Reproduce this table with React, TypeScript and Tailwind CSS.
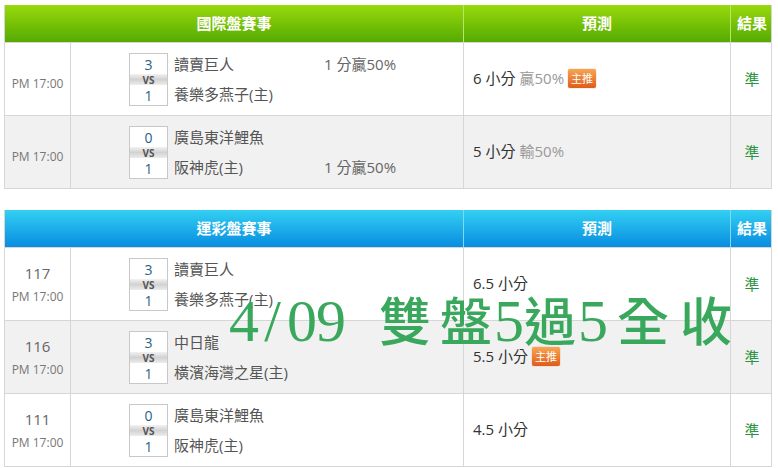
import React from 'react';

type Row = {
  no?: string;
  time: string;
  s1: string;
  s2: string;
  t1: string;
  t2: string;
  hc?: string;
  hcLine?: 1 | 2;
  pick: string;
  pickNote?: string;
  hot?: boolean;
  res: string;
};

const intlRows: Row[] = [
  { time: 'PM 17:00', s1: '3', s2: '1', t1: '讀賣巨人', t2: '養樂多燕子(主)', hc: '1 分贏50%', hcLine: 1, pick: '6 小分', pickNote: '贏50%', hot: true, res: '準' },
  { time: 'PM 17:00', s1: '0', s2: '1', t1: '廣島東洋鯉魚', t2: '阪神虎(主)', hc: '1 分贏50%', hcLine: 2, pick: '5 小分', pickNote: '輸50%', res: '準' },
];

const lotteryRows: Row[] = [
  { no: '117', time: 'PM 17:00', s1: '3', s2: '1', t1: '讀賣巨人', t2: '養樂多燕子(主)', pick: '6.5 小分', res: '準' },
  { no: '116', time: 'PM 17:00', s1: '3', s2: '1', t1: '中日龍', t2: '橫濱海灣之星(主)', pick: '5.5 小分', hot: true, res: '準' },
  { no: '111', time: 'PM 17:00', s1: '0', s2: '1', t1: '廣島東洋鯉魚', t2: '阪神虎(主)', pick: '4.5 小分', res: '準' },
];

const cols = 'grid grid-cols-[65px_393px_267px_43px]';

const Badge = () => (
  <span className="ml-[4px] inline-flex h-[19px] items-center rounded-[2px] bg-gradient-to-b from-[#f8a550] to-[#de5c18] px-[3px] text-[11px] leading-none text-white shadow-[0_0_1px_#c05010]">
    主推
  </span>
);

const ScoreBox = ({ a, b }: { a: string; b: string }) => (
  <div className="mt-[1px] flex w-[39px] flex-col border border-[#c8c8c8] bg-white">
    <div className="flex h-[20px] items-center justify-center text-[14px] text-[#2a5f86]">{a}</div>
    <div className="flex h-[11px] items-center justify-center bg-gradient-to-b from-[#f2f2f2] via-[#d2d2d2] to-[#ececec] text-[10px] font-bold leading-none text-[#555]">
      VS
    </div>
    <div className="flex h-[20px] items-center justify-center text-[14px] text-[#2a5f86]">{b}</div>
  </div>
);

const Table = ({ title, rows, blue }: { title: string; rows: Row[]; blue?: boolean }) => {
  const head = blue
    ? 'bg-gradient-to-b from-[#33d0f2] to-[#0a8ce0]'
    : 'bg-gradient-to-b from-[#98da0c] to-[#55aa03]';
  const sep = blue ? 'border-[#7fd8f5]' : 'border-[#b9e66a]';
  return (
    <div className="w-[768px] border-x border-b border-[#d6d6d6]">
      <div className={`${cols} h-[37px] text-[15px] font-bold text-white ${head}`}>
        <div className="col-span-2 flex items-center justify-center">{title}</div>
        <div className={`flex items-center justify-center border-l ${sep}`}>預測</div>
        <div className={`flex items-center justify-center border-l ${sep}`}>結果</div>
      </div>
      {rows.map((r, i) => (
        <div
          key={i}
          className={`${cols} h-[73px] border-t border-[#d6d6d6] ${i % 2 === 1 ? 'bg-[#f1f1f1]' : 'bg-white'}`}
        >
          <div className={`flex flex-col items-center justify-center text-[#777] ${r.no ? '' : 'pt-[10px]'}`}>
            {r.no && <div className="mb-[8px] text-[15px] leading-[18px] text-[#666]">{r.no}</div>}
            <div className="text-[12px] leading-[14px]">{r.time}</div>
          </div>
          <div className="flex items-center border-l border-[#d6d6d6] pl-[58px]">
            <ScoreBox a={r.s1} b={r.s2} />
            <div className="ml-[6px] flex w-[150px] flex-col justify-between self-stretch py-[10px] text-[15px] text-[#555]">
              <div className="leading-[22px]">{r.t1}</div>
              <div className="leading-[22px]">{r.t2}</div>
            </div>
            <div className="flex flex-col justify-between self-stretch py-[10px] text-[15px] text-[#666]">
              <div className="h-[22px] leading-[22px]">{r.hcLine === 1 ? r.hc : ''}</div>
              <div className="h-[22px] leading-[22px]">{r.hcLine === 2 ? r.hc : ''}</div>
            </div>
          </div>
          <div className="flex items-center border-l border-[#d6d6d6] pb-[2px] pl-[9px] text-[15px] text-[#333]">
            <span>{r.pick}</span>
            {r.pickNote && <span className="ml-[4px] text-[#999]">{r.pickNote}</span>}
            {r.hot && <Badge />}
          </div>
          <div className="flex items-center justify-center border-l border-[#d6d6d6] text-[15px] text-[#2b9443]">
            {r.res}
          </div>
        </div>
      ))}
    </div>
  );
};

// watermark glyphs: [char, width, margin-left, cjk]
const mark: [string, number, number, boolean][] = [
  ['4', 29, 0, false],
  ['/', 29, 0, false],
  ['0', 29, 0, false],
  ['9', 29, 0, false],
  ['雙', 56, 32, true],
  ['盤', 56, 5, true],
  ['5', 28, 0, false],
  ['過', 56, 0, true],
  ['5', 28, 0, false],
  ['全', 56, 9, true],
  ['收', 56, 7, true],
];

export default function App() {
  return (
    <div
      className="relative h-[468px] w-[778px] overflow-hidden bg-white pl-[4px] pt-[5px]"
      style={{ fontFamily: '"Open Sans", "Noto Sans CJK TC", sans-serif' }}
    >
      <Table title="國際盤賽事" rows={intlRows} />
      <div className="h-[21px]" />
      <Table title="運彩盤賽事" rows={lotteryRows} blue />
      <div className="absolute left-[229px] top-[291px] flex items-baseline text-[#3aa85c]">
        {mark.map(([c, w, ml, cjk], i) => (
          <span
            key={i}
            className={`inline-block text-center leading-none ${cjk ? 'text-[52px] font-medium' : 'text-[60px]'}`}
            style={{
              width: w,
              marginLeft: ml,
              fontFamily: cjk ? '"Noto Sans CJK TC", sans-serif' : '"Liberation Serif", serif',
            }}
          >
            {c}
          </span>
        ))}
      </div>
    </div>
  );
}
